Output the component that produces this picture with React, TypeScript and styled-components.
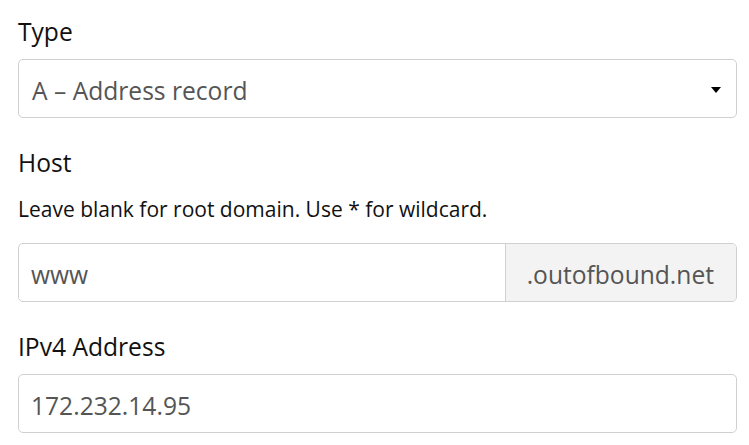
import React from 'react';
import styled, { createGlobalStyle } from 'styled-components';

const GlobalStyle = createGlobalStyle`
  body {
    margin: 0;
    background: #fff;
    font-family: 'Open Sans', 'Noto Sans', sans-serif;
  }
`;

const Form = styled.form`
  display: flex;
  flex-direction: column;
  gap: 27.5px;
  padding: 15px 12px 0 18px;
`;

const Group = styled.div`
  display: flex;
  flex-direction: column;
`;

const Label = styled.label`
  font-size: 24.6px;
  line-height: 34px;
  color: #111;
  margin-bottom: 10px;
`;

const Help = styled.p`
  margin: 5px 0 19.5px;
  font-size: 21px;
  line-height: 29px;
  color: #111;
`;

const Field = styled.div`
  display: flex;
  height: 59px;
  box-sizing: border-box;
  border: 1px solid #d0d0d0;
  border-radius: 5px;
  overflow: hidden;
`;

const Input = styled.input`
  flex: 1;
  min-width: 0;
  border: none;
  outline: none;
  padding: 4px 12px 0;
  font-family: inherit;
  font-size: 24.6px;
  color: #555;
  background: transparent;
`;

const SelectBox = styled(Field)`
  align-items: center;
  justify-content: space-between;
  padding: 4px 15px 0 13px;
  font-size: 24.6px;
  color: #555;
`;

const Caret = styled.span`
  width: 0;
  height: 0;
  margin-top: -2px;
  border-left: 5.5px solid transparent;
  border-right: 5.5px solid transparent;
  border-top: 6px solid #000;
`;

const Addon = styled.span`
  display: flex;
  align-items: center;
  padding: 4px 22px 0 21px;
  background: #f3f3f3;
  border-left: 1px solid #d0d0d0;
  font-size: 24.6px;
  color: #555;
`;

const App = () => {
  return (
    <>
      <GlobalStyle />
      <Form>
        <Group>
          <Label>Type</Label>
          <SelectBox>
            <span>A – Address record</span>
            <Caret />
          </SelectBox>
        </Group>
        <Group>
          <Label>Host</Label>
          <Help>Leave blank for root domain. Use * for wildcard.</Help>
          <Field>
            <Input defaultValue="www" />
            <Addon>.outofbound.net</Addon>
          </Field>
        </Group>
        <Group>
          <Label>IPv4 Address</Label>
          <Field>
            <Input defaultValue="172.232.14.95" />
          </Field>
        </Group>
      </Form>
    </>
  );
};

export default App;
